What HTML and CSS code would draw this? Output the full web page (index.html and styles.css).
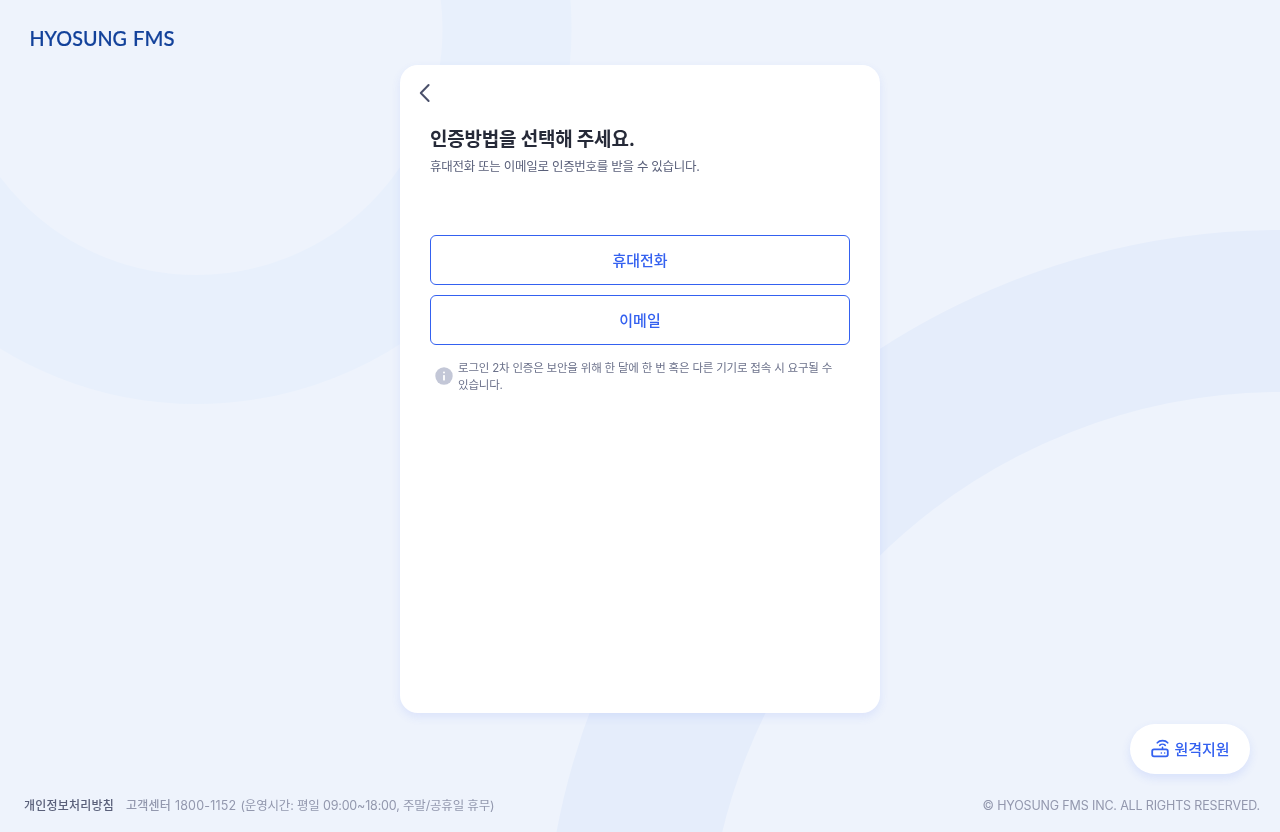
FILE: index.html
```html
<!DOCTYPE html>
<html lang="ko">
<head>
    <meta charset="UTF-8">
    <meta name="viewport" content="width=device-width, initial-scale=1.0">
    <title>HYOSUNG FMS</title>
    <link rel="stylesheet" href="styles.css">
</head>
<body>
    <svg class="background" width="1280" height="832" viewBox="0 0 1280 832" fill="none" aria-hidden="true">
        <circle cx="196.5" cy="29" r="310.5" stroke="#e8f0fc" stroke-width="129"/>
        <circle cx="1282" cy="968" r="657" stroke="#e5edfb" stroke-width="162"/>
    </svg>

    <header class="header">
        <svg class="logo" width="146" height="20" viewBox="0 0 146 20" role="img" aria-label="HYOSUNG FMS">
            <text x="-.5" y="16.6" textLength="97.5" lengthAdjust="spacingAndGlyphs">HYOSUNG</text>
            <text x="103" y="16.6" textLength="41.5" lengthAdjust="spacingAndGlyphs">FMS</text>
        </svg>
    </header>

    <main class="card">
        <button class="back-button" type="button" aria-label="뒤로">
            <svg width="12" height="20" viewBox="0 0 12 20" fill="none">
                <path d="M9.6 2L1.8 10L9.6 18" stroke="#4a506a" stroke-width="2" stroke-linecap="round" stroke-linejoin="round"/>
            </svg>
        </button>
        <h1 class="title">인증방법을 선택해 주세요.</h1>
        <p class="subtitle">휴대전화 또는 이메일로 인증번호를 받을 수 있습니다.</p>

        <div class="methods">
            <button class="method-button" type="button">휴대전화</button>
            <button class="method-button" type="button">이메일</button>
        </div>

        <div class="notice">
            <svg class="notice-icon" width="18" height="18" viewBox="0 0 18 18">
                <circle cx="9" cy="9" r="8.7" fill="#c3c7d7"/>
                <circle cx="9" cy="5.6" r="1" fill="#fff"/>
                <rect x="8.1" y="8" width="1.8" height="5.5" rx=".5" fill="#fff"/>
            </svg>
            <p>로그인 2차 인증은 보안을 위해 한 달에 한 번 혹은 다른 기기로 접속 시 요구될 수<br>있습니다.</p>
        </div>
    </main>

    <button class="remote-button" type="button">
        <svg width="20" height="20" viewBox="0 0 20 20" fill="none" stroke="#3461f0" stroke-width="1.8" stroke-linecap="round">
            <rect x="2.2" y="10.3" width="15.6" height="7.1" rx="1.8"/>
            <path d="M12.5 10V8.4M7.3 3.8C9.8 .9 15.2 .9 17.7 3.8M9.7 6.3C11.2 4.9 13.8 4.9 15.3 6.3" stroke-width="1.6"/>
            <path d="M11.3 14h.1M14.6 14h.1" stroke-width="1.5"/>
        </svg>
        <span>원격지원</span>
    </button>

    <footer class="footer">
        <div class="footer-info">
            <a class="privacy">개인정보처리방침</a>
            <span class="center-name">고객센터</span>
            <span class="center-phone">1800-1152</span>
            <span class="center-hours">(운영시간: 평일 09:00~18:00, 주말/공휴일 휴무)</span>
        </div>
        <div class="copyright">© HYOSUNG FMS INC. ALL RIGHTS RESERVED.</div>
    </footer>
</body>
</html>
```
FILE: styles.css
```css
* {
    margin: 0;
    padding: 0;
    box-sizing: border-box;
}

body {
    height: 100vh;
    overflow: hidden;
    display: flex;
    flex-direction: column;
    background: #eef3fc;
    font-family: Inter, 'Noto Sans CJK KR', sans-serif;
    color: #262a38;
}

button {
    font-family: inherit;
    border: none;
    cursor: pointer;
}

.background {
    position: fixed;
    top: 0;
    left: 0;
    z-index: -1;
}

.header {
    height: 65px;
    padding: 29px 30px 0;
}

.logo {
    display: block;
    overflow: visible;
    font-family: Lato, sans-serif;
    font-size: 20.5px;
    font-weight: 500;
    fill: #12419a;
    stroke: #12419a;
    stroke-width: .2px;
}

.card {
    width: 480px;
    height: 648px;
    margin: 0 auto;
    padding: 18px 30px;
    background: #fff;
    border-radius: 18px;
    box-shadow: 0 4px 10px rgba(60, 95, 245, 0.1);
}

.back-button {
    display: block;
    width: 12px;
    height: 20px;
    margin-left: -11px;
    background: none;
}

.title {
    margin-top: 22px;
    font-size: 19px;
    font-weight: 700;
    line-height: 30px;
    letter-spacing: -0.2px;
    white-space: nowrap;
}

.subtitle {
    margin-top: 2px;
    font-size: 12.5px;
    line-height: 20px;
    letter-spacing: -0.28px;
    color: #5a607a;
    white-space: nowrap;
}

.methods {
    display: flex;
    flex-direction: column;
    gap: 10px;
    margin-top: 58px;
}

.method-button {
    height: 50px;
    padding-bottom: 1px;
    background: #fff;
    border: 1px solid #3461f0;
    border-radius: 6px;
    color: #3461f0;
    font-size: 15px;
    font-weight: 500;
}

.notice {
    display: flex;
    align-items: center;
    gap: 5px;
    margin-top: 14px;
    padding-left: 5px;
    font-size: 11.5px;
    line-height: 17px;
    letter-spacing: -0.2px;
    color: #6c728b;
    white-space: nowrap;
}

.notice p {
    padding-top: 1px;
}

.notice-icon {
    flex-shrink: 0;
    margin-bottom: 2px;
}

.remote-button {
    display: flex;
    align-items: center;
    justify-content: center;
    gap: 4px;
    width: 120px;
    height: 50px;
    margin: 11px 30px 0 auto;
    background: #fff;
    border-radius: 25px;
    box-shadow: 0 4px 10px rgba(60, 95, 245, 0.12);
    color: #3461f0;
    font-size: 15px;
    font-weight: 500;
}

.remote-button span {
    padding-bottom: 2px;
}

.footer {
    display: flex;
    justify-content: space-between;
    margin-top: 22px;
    padding: 0 20px 0 24px;
    font-size: 12.5px;
    line-height: 20px;
    letter-spacing: -0.16px;
    color: #9398ae;
    white-space: nowrap;
}

.footer-info {
    display: flex;
}

.privacy {
    margin-right: 12px;
    font-size: 12px;
    font-weight: 500;
    letter-spacing: 0.2px;
    color: #5a607a;
}

.center-name {
    margin-right: 4px;
    font-size: 12px;
    font-weight: 500;
    letter-spacing: 0.2px;
}

.center-phone {
    margin-right: 4px;
    letter-spacing: 0.2px;
}

.center-hours {
    letter-spacing: -0.17px;
}
```
